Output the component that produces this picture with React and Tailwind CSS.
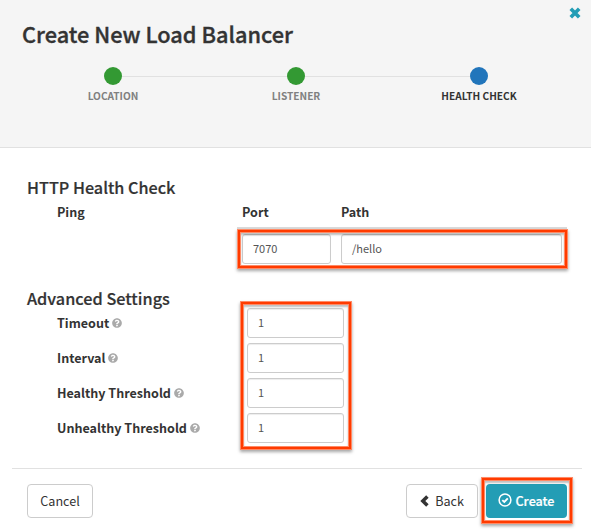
import React from "react";
import { FaQuestionCircle } from "react-icons/fa";

function Highlight({ className }) {
  return (
    <div
      className={`pointer-events-none absolute border border-[#ff8a66] shadow-[0_2px_3px_rgba(0,0,0,0.35)] ${className}`}
    >
      <div className="h-full w-full border-2 border-[#ff3b00]">
        <div className="h-full w-full border border-[#ff8a66] shadow-[inset_0_2px_2px_rgba(0,0,0,0.25)]" />
      </div>
    </div>
  );
}

function Step({ label, color, text }) {
  return (
    <div className="flex w-[183px] flex-col items-center">
      <div className={`z-10 h-[18px] w-[18px] rounded-full ${color}`} />
      <div className={`mt-[5px] text-[10.15px] leading-[12px] font-bold ${text}`}>{label}</div>
    </div>
  );
}

function Field({ value, className }) {
  return (
    <div
      className={`flex h-[30px] items-center rounded-[3px] border border-[#ccc] bg-white pb-[2px] pl-[10px] text-[11px] leading-[14px] text-[#555] shadow-[inset_0_1px_1px_rgba(0,0,0,0.075)] ${className}`}
    >
      {value}
    </div>
  );
}

const settings = ["Timeout", "Interval", "Healthy Threshold", "Unhealthy Threshold"];

export default function App() {
  return (
    <div className="h-[531px] w-[591px] overflow-hidden bg-white font-['Noto_Sans_CJK_SC',sans-serif] whitespace-nowrap text-[#333]">
      <header className="relative h-[148px] border-b border-[#e1e1e1] bg-[#f5f5f5] pt-[19px]">
        <svg viewBox="0 0 12 12" className="absolute top-[7px] right-[10px] h-[12px] w-[12px] fill-none stroke-[#239db5]">
          <path d="M1.8 1.8 10.2 10.2M10.2 1.8 1.8 10.2" strokeWidth="3.7" />
        </svg>
        <h1 className="pl-[22px] text-[21.75px] leading-[29px] font-medium [-webkit-text-stroke:0.35px_#333]">
          Create New Load Balancer
        </h1>
        <div className="relative mt-[19px] flex pl-[21.5px]">
          <div className="absolute top-[9px] left-[113px] h-px w-[366px] bg-[#e1e1e1]" />
          <Step label="LOCATION" color="bg-[#339933]" text="text-[#808080]" />
          <Step label="LISTENER" color="bg-[#339933]" text="text-[#808080]" />
          <Step label="HEALTH CHECK" color="bg-[#2175bb]" text="text-[#333]" />
        </div>
      </header>

      <main className="h-[320px] pt-[28px]">
        <h2 className="pl-[27px] text-[16.2px] leading-[22px] font-medium [-webkit-text-stroke:0.2px_#333]">HTTP Health Check</h2>
        <div className="mt-[6px] flex h-[16px] pl-[57px] text-[12.55px] leading-[16px] font-bold">
          <div className="w-[185px]">Ping</div>
          <div className="w-[99px]">Port</div>
          <div>Path</div>
        </div>
        <div className="relative mt-[14px] ml-[242px] flex w-[320px] gap-[10px]">
          <Field value="7070" className="w-[89px]" />
          <Field value="/hello" className="w-[221px]" />
          <div className="absolute -top-[7px] -left-[5px] h-[2px] w-[330px] bg-[#dadada]" />
          <Highlight className="-top-[5px] -left-[5px] h-[40px] w-[331px]" />
        </div>

        <h2 className="mt-[23px] pl-[27px] text-[16.25px] leading-[22px] font-medium [-webkit-text-stroke:0.2px_#333]">Advanced Settings</h2>
        <div className="mt-[-1px] flex">
          <div className="flex w-[247px] flex-col gap-[5px] pl-[57px]">
            {settings.map((name) => (
              <div key={name} className="flex h-[30px] items-center text-[12.55px] leading-[16px] font-bold">
                {name}
                <FaQuestionCircle className="ml-[3px] h-[10px] w-[10px] text-[#aaa]" />
              </div>
            ))}
          </div>
          <div className="relative flex w-[97px] flex-col gap-[5px]">
            {settings.map((name) => (
              <Field key={name} value="1" className="w-full" />
            ))}
            <Highlight className="-top-[7px] -left-[7px] h-[149px] w-[112px]" />
          </div>
        </div>
      </main>

      <footer className="mr-[9px] ml-[12px] flex border-t border-[#e1e1e1] pt-[15px] pr-[15px] pl-[15px] text-[12.6px] leading-[18px]">
        <button className="flex h-[34px] w-[66px] items-center justify-center rounded-[4px] border border-[#ccc]">
          Cancel
        </button>
        <button className="ml-auto flex h-[34px] w-[72px] items-center justify-center rounded-[4px] border border-[#ccc]">
          <svg viewBox="0 0 9 12" className="mr-[6px] mb-px h-[12px] w-[9px] fill-none stroke-[#333]">
            <path d="M7.4 1.4 2.8 6 7.4 10.6" strokeWidth="3.5" />
          </svg>
          Back
        </button>
        <div className="relative ml-[8px]">
          <button className="flex h-[34px] w-[81px] items-center justify-center rounded-[4px] bg-[#239db5] font-medium text-white [-webkit-text-stroke:0.2px_white]">
            <svg viewBox="0 0 14 14" className="mr-[3px] mb-[2px] h-[14px] w-[14px] fill-none stroke-white">
              <circle cx="7" cy="7" r="5.9" strokeWidth="1.5" />
              <path d="M4.3 7.1 6.3 9 9.8 5.3" strokeWidth="1.9" />
            </svg>
            Create
          </button>
          <Highlight className="-top-[7px] -left-[5px] h-[47px] w-[92px]" />
        </div>
      </footer>
    </div>
  );
}
